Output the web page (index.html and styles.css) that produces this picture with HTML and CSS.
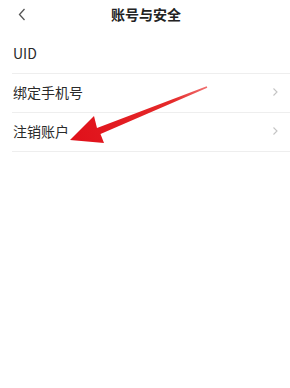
FILE: index.html
```html
<!DOCTYPE html>
<html lang="zh">
<head>
<meta charset="utf-8">
<link rel="stylesheet" href="styles.css">
</head>
<body>
<div class="page">
  <header class="topbar">
    <svg class="back" width="8" height="13" viewBox="0 0 8 13"><path d="M6.5 1 L1.5 6.5 L6.5 12" fill="none" stroke="#555" stroke-width="1.3"/></svg>
    <div class="title">账号与安全</div>
  </header>
  <ul class="list">
    <li class="row row-first"><span>UID</span></li>
    <li class="row"><span>绑定手机号</span><svg class="chev" width="7" height="10" viewBox="0 0 7 10"><path d="M1.5 1.5 L5 5 L1.5 8.5" fill="none" stroke="#c4c4c4" stroke-width="1.1"/></svg></li>
    <li class="row"><span>注销账户</span><svg class="chev" width="7" height="10" viewBox="0 0 7 10"><path d="M1.5 1.5 L5 5 L1.5 8.5" fill="none" stroke="#c4c4c4" stroke-width="1.1"/></svg></li>
  </ul>
  <svg class="annot" width="290" height="388" viewBox="0 0 290 388">
    <defs>
      <linearGradient id="g" x1="207" y1="87" x2="70" y2="140" gradientUnits="userSpaceOnUse">
        <stop offset="0" stop-color="#f07070"/>
        <stop offset="0.25" stop-color="#e52a2a"/>
        <stop offset="1" stop-color="#e0101a"/>
      </linearGradient>
    </defs>
    <polygon points="70,140 94,116 97,128 206.7,86.3 207.3,87.7 100.5,134 104,143" fill="url(#g)"/>
  </svg>
</div>
</body>
</html>
```
FILE: styles.css
```css
html, body {
  margin: 0;
  padding: 0;
  background: #fff;
}
body {
  font-family: "Noto Sans CJK SC", "Noto Sans", sans-serif;
  color: #222;
}
.page {
  position: relative;
  width: 290px;
  height: 388px;
  overflow: hidden;
}
.topbar {
  position: relative;
  height: 29px;
  display: flex;
  align-items: center;
  justify-content: center;
}
.back {
  position: absolute;
  left: 18px;
  top: 8px;
}
.title {
  font-size: 14px;
  font-weight: 700;
  line-height: 29px;
  color: #222;
  margin-left: 2px;
}
.list {
  list-style: none;
  margin: 0 0 0 12px;
  padding: 0;
}
.row {
  display: flex;
  align-items: center;
  justify-content: space-between;
  font-size: 14px;
  line-height: 20px;
  padding: 8px 12px 10px 1px;
  border-bottom: 1px solid #eeeeee;
  color: #2a2a2a;
}
.row-first {
  padding-top: 14px;
  padding-bottom: 10px;
}
.chev {
  display: block;
  margin-right: -1px;
}
.annot {
  position: absolute;
  left: 0;
  top: 0;
  pointer-events: none;
}
```
